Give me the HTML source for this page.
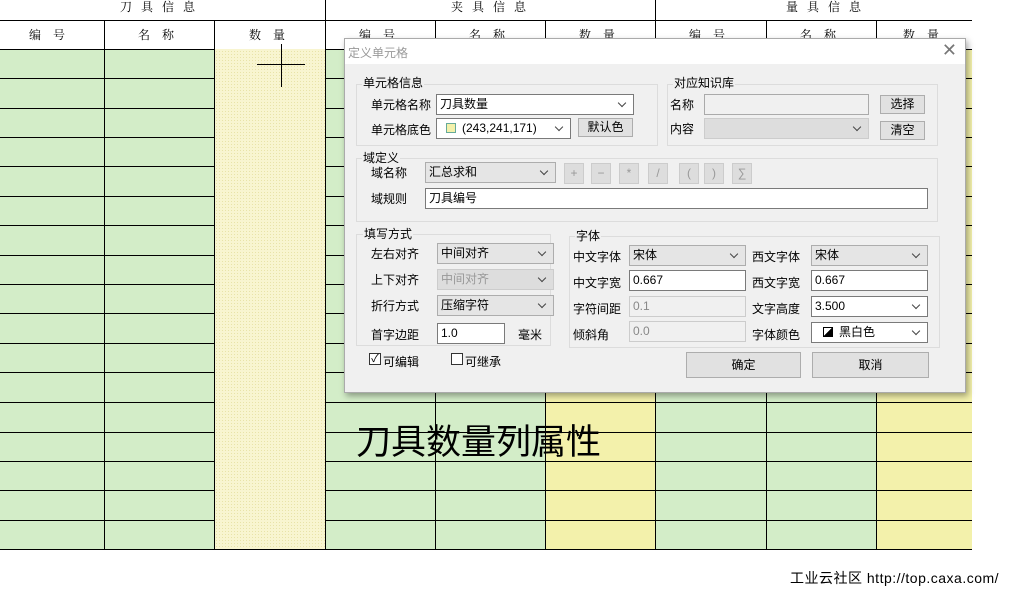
<!DOCTYPE html>
<html><head><meta charset="utf-8"><style>
*{margin:0;padding:0;box-sizing:border-box}
body{width:1018px;height:595px;background:#fff;position:relative;overflow:hidden;font-family:"Liberation Sans","Noto Sans CJK SC",sans-serif;font-size:12px;color:#000}
.a{position:absolute}
.dlg{left:344px;top:38px;width:622px;height:355px;background:#f0f0f0;border:1px solid #aaa;box-shadow:2px 3px 6px rgba(0,0,0,.35)}
.tb{left:0;top:0;width:620px;height:25px;background:#fff}
.grp{border:1px solid #dcdcdc}
.lg{background:#f0f0f0;padding:0 1px;line-height:14px}
.in{background:#fff;border:1px solid #7a7a7a;height:21px;line-height:19px;padding-left:3px}
.dis{background:#f0f0f0;border:1px solid #ccc;color:#888}
.cb{background:#e5e5e5;border:1px solid #adadad;height:21px;line-height:19px;padding-left:3px}
.cbd{background:#ddd;border:1px solid #ccc;color:#999;height:21px;line-height:19px;padding-left:3px}
.ar::after{content:"";position:absolute;right:8px;top:5px;width:5px;height:5px;border-right:1px solid #444;border-bottom:1px solid #444;transform:rotate(45deg)}
.btn{background:#e1e1e1;border:1px solid #adadad;text-align:center;line-height:17px}
.ob{background:#ddd;border:1px solid #ccc;color:#999;text-align:center;line-height:19px;width:20px;height:21px}
</style></head><body>
<svg class="a" style="left:0;top:0" width="1018" height="595">
<defs><pattern id="dt" width="3" height="3" patternUnits="userSpaceOnUse"><rect width="3" height="3" fill="#f8f5d0"/><rect width="1" height="1" fill="#e8e3a8"/></pattern></defs>
<rect x="0" y="49" width="214" height="500" fill="#d3edc8"/>
<rect x="214" y="49" width="111" height="500" fill="url(#dt)"/>
<rect x="325" y="49" width="220" height="500" fill="#d3edc8"/>
<rect x="545" y="49" width="110" height="500" fill="#f3f1ab"/>
<rect x="655" y="49" width="221" height="500" fill="#d3edc8"/>
<rect x="876" y="49" width="96" height="500" fill="#f3f1ab"/>
<g stroke="#000" stroke-width="1">
<line x1="0" y1="20.5" x2="972" y2="20.5"/>
<line x1="0" y1="49.5" x2="214" y2="49.5"/><line x1="325" y1="49.5" x2="972" y2="49.5"/>
<line x1="325.5" y1="0" x2="325.5" y2="549"/><line x1="655.5" y1="0" x2="655.5" y2="549"/>
<line x1="104.5" y1="20" x2="104.5" y2="549"/><line x1="214.5" y1="20" x2="214.5" y2="549"/>
<line x1="435.5" y1="20" x2="435.5" y2="549"/><line x1="545.5" y1="20" x2="545.5" y2="549"/>
<line x1="766.5" y1="20" x2="766.5" y2="549"/><line x1="876.5" y1="20" x2="876.5" y2="549"/>
<line x1="0" y1="549.5" x2="972" y2="549.5"/>
<line x1="257" y1="64.5" x2="305" y2="64.5"/><line x1="281.5" y1="44" x2="281.5" y2="87"/>
</g>
<g stroke="#000">
<line x1="0" y1="78.5" x2="214" y2="78.5"/><line x1="0" y1="108.5" x2="214" y2="108.5"/><line x1="0" y1="137.5" x2="214" y2="137.5"/>
<line x1="0" y1="166.5" x2="214" y2="166.5"/><line x1="0" y1="196.5" x2="214" y2="196.5"/><line x1="0" y1="225.5" x2="214" y2="225.5"/>
<line x1="0" y1="255.5" x2="214" y2="255.5"/><line x1="0" y1="284.5" x2="214" y2="284.5"/><line x1="0" y1="313.5" x2="214" y2="313.5"/>
<line x1="0" y1="343.5" x2="214" y2="343.5"/><line x1="0" y1="372.5" x2="214" y2="372.5"/><line x1="0" y1="402.5" x2="214" y2="402.5"/>
<line x1="0" y1="432.5" x2="214" y2="432.5"/><line x1="0" y1="461.5" x2="214" y2="461.5"/><line x1="0" y1="490.5" x2="214" y2="490.5"/><line x1="0" y1="520.5" x2="214" y2="520.5"/>
<line x1="325" y1="78.5" x2="344" y2="78.5"/><line x1="325" y1="108.5" x2="344" y2="108.5"/><line x1="325" y1="137.5" x2="344" y2="137.5"/><line x1="325" y1="166.5" x2="344" y2="166.5"/><line x1="325" y1="196.5" x2="344" y2="196.5"/><line x1="325" y1="225.5" x2="344" y2="225.5"/><line x1="325" y1="255.5" x2="344" y2="255.5"/><line x1="325" y1="284.5" x2="344" y2="284.5"/><line x1="325" y1="313.5" x2="344" y2="313.5"/><line x1="325" y1="343.5" x2="344" y2="343.5"/><line x1="325" y1="372.5" x2="344" y2="372.5"/>
<line x1="966" y1="78.5" x2="972" y2="78.5"/><line x1="966" y1="108.5" x2="972" y2="108.5"/><line x1="966" y1="137.5" x2="972" y2="137.5"/><line x1="966" y1="166.5" x2="972" y2="166.5"/><line x1="966" y1="196.5" x2="972" y2="196.5"/><line x1="966" y1="225.5" x2="972" y2="225.5"/><line x1="966" y1="255.5" x2="972" y2="255.5"/><line x1="966" y1="284.5" x2="972" y2="284.5"/><line x1="966" y1="313.5" x2="972" y2="313.5"/><line x1="966" y1="343.5" x2="972" y2="343.5"/><line x1="966" y1="372.5" x2="972" y2="372.5"/>
<line x1="325" y1="402.5" x2="972" y2="402.5"/><line x1="325" y1="432.5" x2="972" y2="432.5"/><line x1="325" y1="461.5" x2="972" y2="461.5"/><line x1="325" y1="490.5" x2="972" y2="490.5"/><line x1="325" y1="520.5" x2="972" y2="520.5"/>
</g>
<g font-size="12" text-anchor="middle" font-family="Noto Serif CJK SC,serif">
<text x="162" y="11" letter-spacing="9">刀具信息</text><text x="493" y="11" letter-spacing="9">夹具信息</text><text x="828" y="11" letter-spacing="9">量具信息</text>
<text x="53" y="39" letter-spacing="12">编号</text><text x="162" y="39" letter-spacing="12">名称</text><text x="273" y="39" letter-spacing="12">数量</text>
<text x="383" y="39" letter-spacing="12">编号</text><text x="493" y="39" letter-spacing="12">名称</text><text x="603" y="39" letter-spacing="12">数量</text>
<text x="713" y="39" letter-spacing="12">编号</text><text x="824" y="39" letter-spacing="12">名称</text><text x="927" y="39" letter-spacing="12">数量</text>
</g>
</svg>
<div class="a" style="left:356px;top:418px;font-size:35px;line-height:44px;font-family:'Noto Sans CJK SC',sans-serif">刀具数量列属性</div>
<div class="a" style="left:790px;top:569px;font-size:14px;line-height:18px;letter-spacing:0.5px;font-family:'Liberation Sans','Noto Sans CJK SC',sans-serif">工业云社区 http://top.caxa.com/</div>

<div class="a dlg">
<div class="a tb"><span class="a" style="left:3px;top:5px;color:#999">定义单元格</span><span class="a" style="right:8px;top:1px;font-size:18px;color:#777">✕</span></div>
<div class="a grp" style="left:11px;top:45px;width:302px;height:62px"></div>
<span class="a lg" style="left:17px;top:37px">单元格信息</span>
<span class="a" style="left:26px;top:57px">单元格名称</span>
<div class="a in ar" style="left:91px;top:55px;width:198px">刀具数量</div>
<span class="a" style="left:26px;top:82px">单元格底色</span>
<div class="a in ar" style="left:91px;top:79px;width:135px"><span style="display:inline-block;width:10px;height:10px;background:#f3f1ab;border:1px solid #6a9;vertical-align:-1px;margin:0 6px 0 6px"></span>(243,241,171)</div>
<div class="a btn" style="left:233px;top:79px;width:55px;height:19px">默认色</div>
<div class="a grp" style="left:322px;top:45px;width:271px;height:62px"></div>
<span class="a lg" style="left:328px;top:37px">对应知识库</span>
<span class="a" style="left:325px;top:57px">名称</span>
<div class="a in dis" style="left:359px;top:55px;width:165px;background:#f0f0f0;border-color:#aaa"></div>
<div class="a btn" style="left:535px;top:56px;width:45px;height:19px">选择</div>
<span class="a" style="left:325px;top:81px">内容</span>
<div class="a cbd ar" style="left:359px;top:79px;width:165px"></div>
<div class="a btn" style="left:535px;top:82px;width:45px;height:19px">清空</div>
<div class="a grp" style="left:11px;top:119px;width:582px;height:64px"></div>
<span class="a lg" style="left:17px;top:113px;line-height:12px">域定义</span>
<span class="a" style="left:26px;top:125px">域名称</span>
<div class="a cb ar" style="left:80px;top:123px;width:131px">汇总求和</div>
<div class="a ob" style="left:219px;top:124px">+</div><div class="a ob" style="left:246px;top:124px">−</div><div class="a ob" style="left:274px;top:124px">*</div><div class="a ob" style="left:303px;top:124px">/</div><div class="a ob" style="left:334px;top:124px">(</div><div class="a ob" style="left:359px;top:124px">)</div><div class="a ob" style="left:387px;top:124px">∑</div>
<span class="a" style="left:26px;top:151px">域规则</span>
<div class="a in" style="left:80px;top:149px;width:503px">刀具编号</div>
<div class="a grp" style="left:11px;top:195px;width:195px;height:112px"></div>
<span class="a lg" style="left:18px;top:188px">填写方式</span>
<span class="a" style="left:26px;top:206px">左右对齐</span><div class="a cb ar" style="left:92px;top:204px;width:117px">中间对齐</div>
<span class="a" style="left:26px;top:232px">上下对齐</span><div class="a cbd ar" style="left:92px;top:230px;width:117px">中间对齐</div>
<span class="a" style="left:26px;top:258px">折行方式</span><div class="a cb ar" style="left:92px;top:256px;width:117px">压缩字符</div>
<span class="a" style="left:26px;top:287px">首字边距</span><div class="a in" style="left:92px;top:284px;width:68px">1.0</div>
<span class="a" style="left:173px;top:287px">毫米</span>
<div class="a grp" style="left:224px;top:197px;width:371px;height:112px"></div>
<span class="a lg" style="left:230px;top:190px">字体</span>
<span class="a" style="left:228px;top:209px">中文字体</span><div class="a cb ar" style="left:284px;top:206px;width:117px">宋体</div>
<span class="a" style="left:407px;top:209px">西文字体</span><div class="a cb ar" style="left:466px;top:206px;width:117px">宋体</div>
<span class="a" style="left:228px;top:235px">中文字宽</span><div class="a in" style="left:284px;top:231px;width:117px">0.667</div>
<span class="a" style="left:407px;top:235px">西文字宽</span><div class="a in" style="left:466px;top:231px;width:117px">0.667</div>
<span class="a" style="left:228px;top:261px">字符间距</span><div class="a in dis" style="left:284px;top:257px;width:117px">0.1</div>
<span class="a" style="left:407px;top:261px">文字高度</span><div class="a in ar" style="left:466px;top:257px;width:117px">3.500</div>
<span class="a" style="left:228px;top:287px">倾斜角</span><div class="a in dis" style="left:284px;top:282px;width:117px">0.0</div>
<span class="a" style="left:407px;top:287px">字体颜色</span><div class="a in ar" style="left:466px;top:283px;width:117px"><span style="display:inline-block;width:10px;height:10px;background:linear-gradient(135deg,#fff 50%,#000 50%);border:1px solid #000;vertical-align:-1px;margin:0 6px 0 8px"></span>黑白色</div>
<span class="a" style="left:24px;top:314px;width:12px;height:12px;border:1px solid #333;background:#fff;font-size:11px;line-height:10px;text-align:center">✓</span><span class="a" style="left:38px;top:314px">可编辑</span>
<span class="a" style="left:106px;top:314px;width:12px;height:12px;border:1px solid #333;background:#fff"></span><span class="a" style="left:120px;top:314px">可继承</span>
<div class="a btn" style="left:341px;top:313px;width:115px;height:26px;line-height:24px">确定</div>
<div class="a btn" style="left:467px;top:313px;width:117px;height:26px;line-height:24px">取消</div>
</div>
</body></html>
